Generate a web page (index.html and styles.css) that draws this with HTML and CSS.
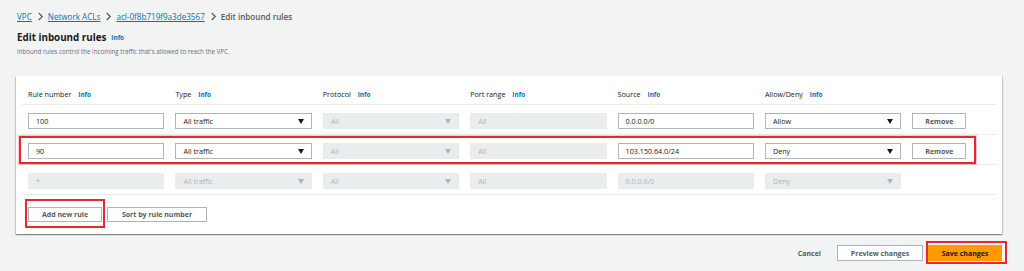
FILE: index.html
```html
<!DOCTYPE html>
<html>
<head>
<meta charset="utf-8">
<link rel="stylesheet" href="styles.css">
</head>
<body>
<div class="page">
  <nav class="crumbs">
    <a class="crumb-link">VPC</a>
    <svg class="chev" viewBox="0 0 8 10"><path d="M2 1l4 4-4 4" fill="none" stroke="#545b64" stroke-width="1.4"/></svg>
    <a class="crumb-link">Network ACLs</a>
    <svg class="chev" viewBox="0 0 8 10"><path d="M2 1l4 4-4 4" fill="none" stroke="#545b64" stroke-width="1.4"/></svg>
    <a class="crumb-link">acl-0f8b719f9a3de3567</a>
    <svg class="chev" viewBox="0 0 8 10"><path d="M2 1l4 4-4 4" fill="none" stroke="#545b64" stroke-width="1.4"/></svg>
    <span class="crumb-current">Edit inbound rules</span>
  </nav>
  <h1 class="title">Edit inbound rules <span class="info info-title">Info</span></h1>
  <p class="subtitle">Inbound rules control the incoming traffic that's allowed to reach the VPC.</p>

  <section class="card">
    <div class="grid head">
      <div class="hcell">Rule number <span class="info">Info</span></div>
      <div class="hcell">Type <span class="info">Info</span></div>
      <div class="hcell">Protocol <span class="info">Info</span></div>
      <div class="hcell">Port range <span class="info">Info</span></div>
      <div class="hcell">Source <span class="info">Info</span></div>
      <div class="hcell">Allow/Deny <span class="info">Info</span></div>
      <div></div>
    </div>

    <div class="grid row">
      <div class="field">100</div>
      <div class="field select">All traffic<span class="caret"></span></div>
      <div class="field disabled select">All<span class="caret"></span></div>
      <div class="field disabled">All</div>
      <div class="field">0.0.0.0/0</div>
      <div class="field select">Allow<span class="caret"></span></div>
      <button class="btn remove">Remove</button>
    </div>

    <div class="grid row highlight">
      <div class="field">90</div>
      <div class="field select">All traffic<span class="caret"></span></div>
      <div class="field disabled select">All<span class="caret"></span></div>
      <div class="field disabled">All</div>
      <div class="field">103.150.64.0/24</div>
      <div class="field select">Deny<span class="caret"></span></div>
      <button class="btn remove">Remove</button>
    </div>

    <div class="grid row">
      <div class="field disabled">*</div>
      <div class="field disabled select">All traffic<span class="caret"></span></div>
      <div class="field disabled select">All<span class="caret"></span></div>
      <div class="field disabled">All</div>
      <div class="field disabled">0.0.0.0/0</div>
      <div class="field disabled select">Deny<span class="caret"></span></div>
      <div></div>
    </div>

    <div class="card-actions">
      <button class="btn add highlight-btn">Add new rule</button>
      <button class="btn sort">Sort by rule number</button>
    </div>
  </section>

  <div class="page-actions">
    <button class="link-btn">Cancel</button>
    <button class="btn preview">Preview changes</button>
    <button class="btn primary save">Save changes</button>
  </div>
</div>
</body>
</html>
```

FILE: styles.css
```css
* { box-sizing: border-box; }
html, body { margin: 0; padding: 0; }
body {
  background: #f2f3f3;
  font-family: "Open Sans", "Noto Sans", Arial, sans-serif;
  color: #16191f;
  width: 1024px;
  height: 271px;
  overflow: hidden;
}
.page { padding: 8px 22px 0 16px; }

.crumbs {
  display: flex;
  align-items: center;
  height: 16px;
  padding-left: 1px;
  font-size: 8.1px;
}
.crumb-link { color: #0073bb; text-decoration: underline; }
.crumb-current { color: #545b64; font-weight: 600; }
.chev { width: 7px; height: 9px; margin: 0 4px 0 5px; }

.title {
  margin: 7px 0 0 1px;
  font-size: 9.8px;
  line-height: 14px;
  font-weight: 700;
  height: 14px;
  display: flex;
  align-items: center;
}
.info { color: #0073bb; font-weight: 700; font-size: 6.4px; margin-left: 5px; }
.info-title { margin-left: 5px; font-size: 6.4px; }
.subtitle {
  margin: 2px 0 0 1px;
  font-size: 6.2px;
  line-height: 9px;
  color: #687078;
}

.card {
  margin-top: 20px;
  background: #fff;
  padding: 0 6px;
  box-shadow: 0 1px 1px 0 rgba(0,28,36,.3), 1px 1px 1px 0 rgba(0,28,36,.15), -1px 1px 1px 0 rgba(0,28,36,.15);
}
.grid {
  display: grid;
  grid-template-columns: repeat(6, 136.4px) 54px;
  column-gap: 11px;
  padding: 0 6px;
  border-bottom: 1px solid #eaeded;
}
.head { height: 29px; align-items: center; padding-top: 7px; }
.hcell { font-size: 7.2px; color: #16191f; white-space: nowrap; }
.row { height: 30px; padding-top: 8px; position: relative; }
.highlight::after {
  content: "";
  position: absolute;
  left: -3px;
  right: 20px;
  top: 1px;
  bottom: 0;
  border: 2px solid #e8282f;
  box-shadow: 0 0 0 1px rgba(232,40,47,.25);
  pointer-events: none;
}

.field {
  height: 16px;
  border: 1px solid #aab7b8;
  background: #fff;
  font-size: 7.2px;
  line-height: 14px;
  padding: 0 7px;
  color: #16191f;
  position: relative;
}
.field.disabled {
  background: #eaeded;
  border-color: #eaeded;
  color: #aab7b8;
}
.row:last-of-type .field { height: 15px; }
.caret {
  position: absolute;
  right: 7px;
  top: 5px;
  width: 0; height: 0;
  border-left: 3.5px solid transparent;
  border-right: 3.5px solid transparent;
  border-top: 5px solid #16191f;
}
.disabled .caret { border-top-color: #aab7b8; }

.btn {
  font-family: inherit;
  background: #fff;
  border: 1px solid #aab7b8;
  color: #545b64;
  font-weight: 700;
  font-size: 7px;
  height: 16px;
  padding: 0;
  cursor: pointer;
}
.remove { width: 54px; }

.card-actions {
  display: flex;
  gap: 5px;
  padding: 12px 6px 12px;
  height: 39px;
}
.card-actions .btn { height: 15px; }
.add { width: 74px; position: relative; }
.sort { width: 100px; }
.highlight-btn::after {
  content: "";
  position: absolute;
  left: -4px; right: -4px; top: -9px; bottom: -7px;
  border: 2px solid #e8282f;
}

.page-actions {
  display: flex;
  justify-content: flex-end;
  align-items: center;
  margin-top: 11px;
}
.link-btn {
  font-family: inherit;
  background: none;
  border: 0;
  color: #545b64;
  font-weight: 700;
  font-size: 7px;
  padding: 0;
  margin-right: 16px;
}
.preview { width: 86px; }
.save { width: 74px; margin-left: 5px; position: relative; }
.primary {
  background: #f90;
  border-color: #f90;
  color: #16191f;
}
.save::after {
  content: "";
  position: absolute;
  left: -3px; right: -6px; top: -5px; bottom: -4px;
  border: 2px solid #e8282f;
}
```
